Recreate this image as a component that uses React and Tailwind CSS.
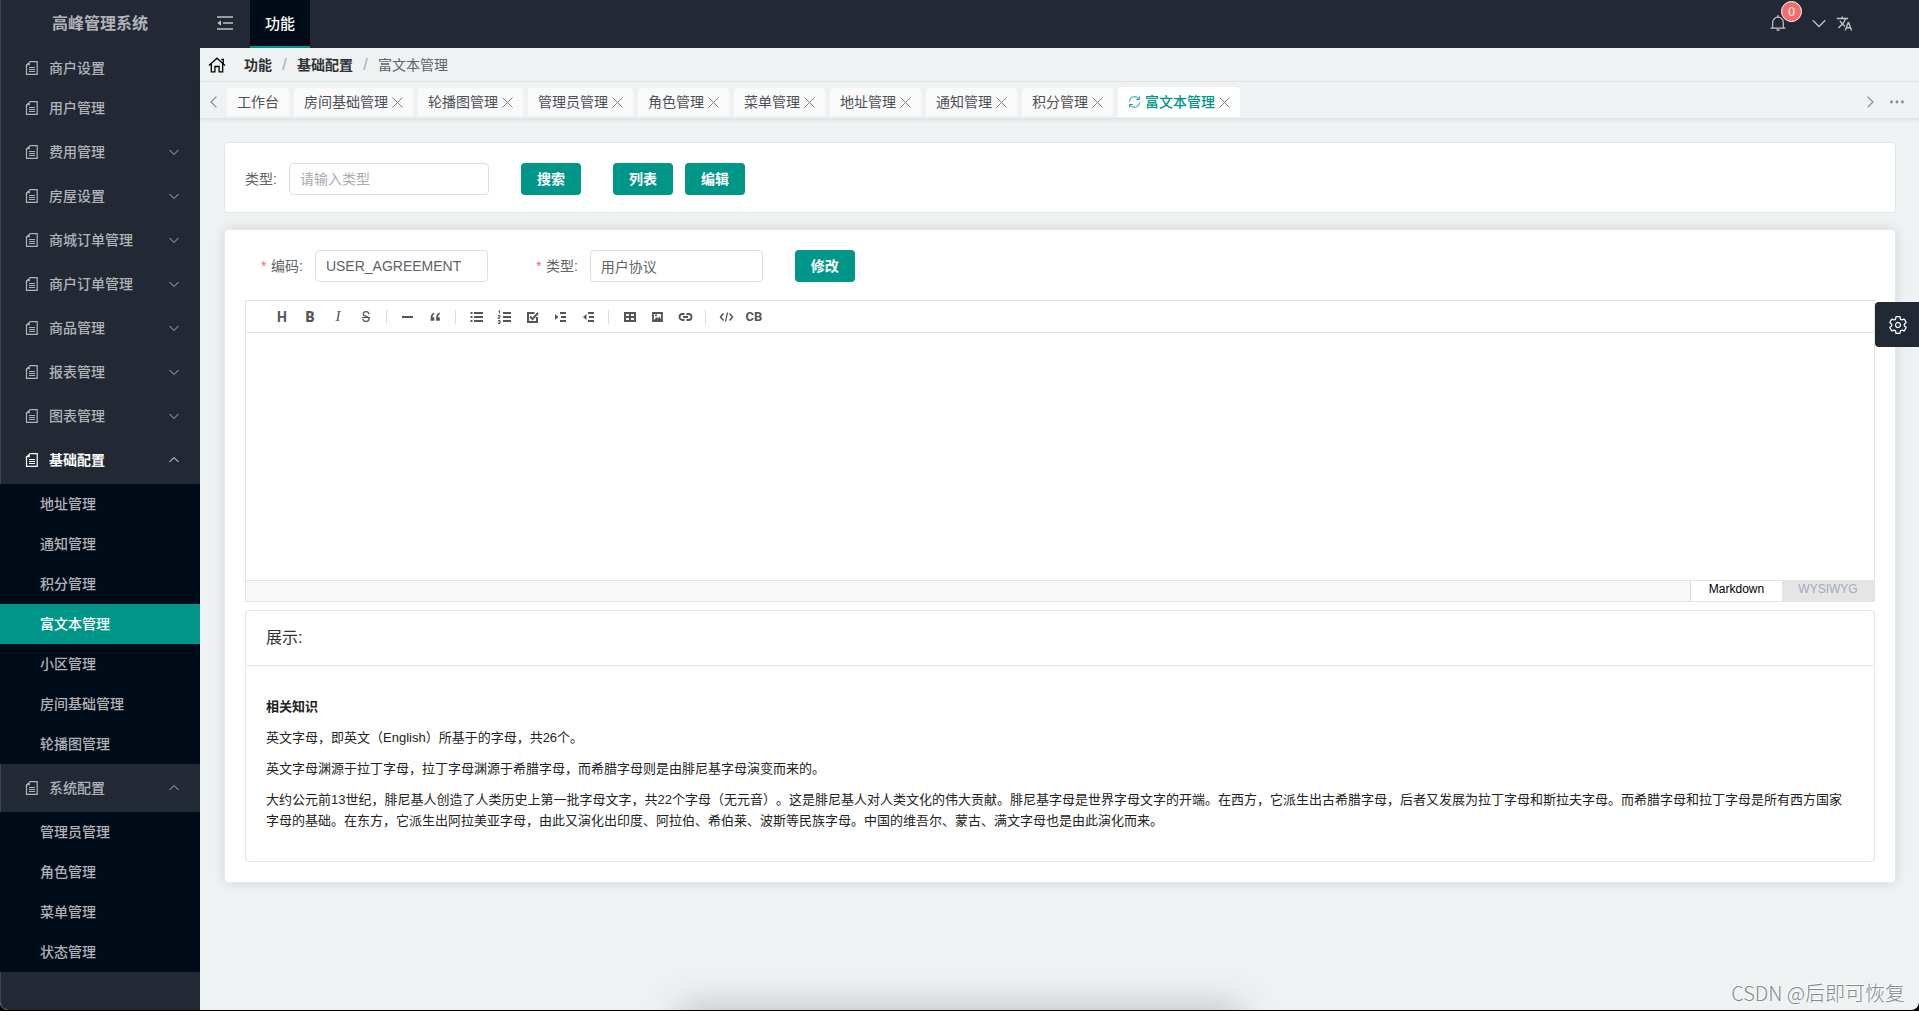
import React from "react";
import { IoSettingsOutline } from "react-icons/io5";

function DocIcon() {
  return (
    <svg width="13" height="14" viewBox="0 0 13 14" fill="none" stroke="currentColor" aria-hidden="true">
      <path d="M4.500 .6h7.700v12.800H1.500V4" strokeWidth="1.200" />
      <path d="M.3 4.300 4.800 .3v4z" fill="currentColor" stroke="none" />
      <path d="M4 6.500h6M4 8.500h6M4 10.500h6" />
    </svg>
  );
}

function HomeIcon() {
  return (
    <svg className="mr-[18px] text-black" width="18" height="16" viewBox="0 0 18 16" fill="none" stroke="currentColor" strokeWidth="1.300" aria-hidden="true">
      <path d="M1 8.500 9 1.200l8 7.300M13.300 2.500h2v4.200" />
      <path d="M3.300 7v7.800h3.600V9.500h4.200v5.300h3.600V7" />
    </svg>
  );
}

function BellIcon() {
  return (
    <svg width="16" height="16" viewBox="0 0 16 16" fill="none" stroke="currentColor" aria-hidden="true">
      <path d="M2.700 12.800V7.500a5.300 5.300 0 0 1 10.600 0v5.300M.5 13.200h15" strokeWidth="1.200" />
      <path d="M8 .3v1.700M6.500 15h3" strokeWidth="1.500" />
    </svg>
  );
}

function Chevron({ dir = "down", size = 10, width = 1, className = "" }) {
  const d = {
    down: "M.5 3 5 7.500 9.500 3",
    up: "M.5 7 5 2.500 9.500 7",
    left: "M7 .5 2.500 5 7 9.500",
    right: "M3 .5 7.500 5 3 9.500",
  }[dir];
  return (
    <svg className={className} width={size} height={size} viewBox="0 0 10 10" fill="none" stroke="currentColor" strokeWidth={width} aria-hidden="true">
      <path d={d} />
    </svg>
  );
}

function CloseIcon() {
  return (
    <svg width="11" height="11" viewBox="0 0 11 11" stroke="currentColor" fill="none" aria-hidden="true">
      <path d="M.5 .5l10 10M10.500 .5l-10 10" />
    </svg>
  );
}

const plainItems = ["商户设置", "用户管理"];
const groups = ["费用管理", "房屋设置", "商城订单管理", "商户订单管理", "商品管理", "报表管理", "图表管理"];
const baseItems = ["地址管理", "通知管理", "积分管理", "富文本管理", "小区管理", "房间基础管理", "轮播图管理"];
const systemItems = ["管理员管理", "角色管理", "菜单管理", "状态管理"];
const tabs = ["工作台", "房间基础管理", "轮播图管理", "管理员管理", "角色管理", "菜单管理", "地址管理", "通知管理", "积分管理"];

function GroupButton({ label, open, active, tall }) {
  return (
    <button
      type="button"
      aria-expanded={!!open}
      className={`flex w-full items-center pr-[21px] pl-[25px] ${tall ? "h-12" : "h-11"} ${active ? "font-bold text-white" : ""}`}
    >
      <DocIcon />
      <span className="ml-[11px] flex-1 text-left">{label}</span>
      <Chevron dir={open ? "up" : "down"} />
    </button>
  );
}

function SubMenu({ items, current }) {
  return (
    <ul className="bg-[#000c17]">
      {items.map((item) => (
        <li key={item}>
          <a
            href="#"
            className={`flex h-10 items-center pl-10 ${item === current ? "bg-[#009688] text-white" : ""}`}
          >
            {item}
          </a>
        </li>
      ))}
    </ul>
  );
}

function Sidebar() {
  return (
    <aside className="flex w-[200px] shrink-0 flex-col rounded-bl-lg border-l border-[#3d4450] bg-[#222834] text-sm font-medium text-[#b1b3b8]">
      <h1 className="-ml-px flex h-12 items-center justify-center pb-px text-base font-bold">高峰管理系统</h1>
      <nav className="-ml-px">
        {plainItems.map((item) => (
          <a key={item} href="#" className="flex h-10 items-center gap-[11px] pl-[25px]">
            <DocIcon />
            {item}
          </a>
        ))}
        <div className="py-0.5">
          {groups.map((g) => (
            <GroupButton key={g} label={g} />
          ))}
          <GroupButton label="基础配置" open active />
        </div>
        <SubMenu items={baseItems} current="富文本管理" />
        <GroupButton label="系统配置" open tall />
        <SubMenu items={systemItems} />
      </nav>
    </aside>
  );
}

function Header() {
  return (
    <header className="flex h-12 items-stretch bg-[#222834] text-[#c0c3c9]">
      <button type="button" aria-label="折叠菜单" className="flex w-[50px] items-center justify-center pb-0.5">
        <svg width="16" height="14" viewBox="0 0 16 14" fill="none" stroke="currentColor" strokeWidth="1.4">
          <path d="M0 1h16M6 7h10M0 13h16" />
          <path d="M4 4.200v5.600L.3 7z" fill="currentColor" stroke="none" />
        </svg>
      </button>
      <a href="#" className="flex w-[60px] items-center justify-center border-b-2 border-[#009688] bg-[#000c17] pt-0.5 text-[15px] font-medium text-white">
        功能
      </a>
      <div className="ml-auto flex items-center pr-[66px] pb-0.5">
        <button type="button" aria-label="通知" className="relative mr-[26px]">
          <BellIcon />
          <span className="absolute -top-3.5 left-[11px] flex h-[21px] w-[21px] items-center justify-center rounded-full border border-white bg-[#f56c6c] text-xs text-white">
            0
          </span>
        </button>
        <button type="button" aria-label="用户菜单" className="mr-2.5">
          <Chevron size={14} width={0.9} />
        </button>
        <button type="button" aria-label="语言">
          <svg width="17" height="17" viewBox="0 0 24 24" fill="currentColor">
            <path d="M12.870 15.070l-2.540-2.510.03-.03c1.740-1.940 2.980-4.170 3.710-6.530H17V4h-7V2H8v2H1v1.990h11.170C11.500 7.920 10.440 9.750 9 11.350 8.070 10.320 7.300 9.190 6.690 8h-2c.73 1.630 1.730 3.170 2.980 4.560l-5.090 5.020L4 19l5-5 3.110 3.110.76-2.040zM18.500 10h-2L12 22h2l1.120-3h4.750L21 22h2l-4.500-12zm-2.620 7l1.620-4.330L19.120 17h-3.240z" />
          </svg>
        </button>
      </div>
    </header>
  );
}

function Separator() {
  return <span className="mx-[9px] w-[7px] text-center text-base text-[#a8abb2]">/</span>;
}

function Breadcrumb() {
  return (
    <nav aria-label="面包屑" className="flex h-[34px] items-center border-b border-[#e4e8ea] px-2 text-sm">
      <HomeIcon />
      <a href="#" className="font-bold text-[#303133]">功能</a>
      <Separator />
      <a href="#" className="font-bold text-[#303133]">基础配置</a>
      <Separator />
      <span className="text-[#606266]">富文本管理</span>
    </nav>
  );
}

function TabBar() {
  return (
    <div className="flex h-[37px] items-center border-b border-[#dfe3e5] pt-1 pr-[15px] text-sm text-[#4d5056] shadow-[0_1px_4px_rgba(0,21,41,0.08)]">
      <button type="button" aria-label="向左" className="flex w-[27px] items-center justify-center text-[#86898e]">
        <Chevron dir="left" size={12} />
      </button>
      <div className="flex items-center gap-[5px]">
        {tabs.map((t, i) => (
          <div key={t} className="flex h-7 items-center gap-1 rounded-t-sm bg-[#fafafa] px-2.5">
            <a href="#">{t}</a>
            {i > 0 && (
              <button type="button" aria-label="关闭" className="text-[#7d8085]">
                <CloseIcon />
              </button>
            )}
          </div>
        ))}
        <div className="flex h-[30px] items-center gap-1 rounded-t-sm bg-white px-2.5">
          <svg width="13" height="14" viewBox="0 0 14 14" fill="none" stroke="#009688" aria-hidden="true">
            <path d="M1.500 6.500A5.500 5.500 0 0 1 11.800 4M12.500 7.500A5.500 5.500 0 0 1 2.200 10" />
            <path d="M12.300 1v3.300H9M1.700 13V9.700H5" />
          </svg>
          <a href="#" className="font-medium text-[#009688]">富文本管理</a>
          <button type="button" aria-label="关闭" className="text-[#7d8085]">
            <CloseIcon />
          </button>
        </div>
      </div>
      <button type="button" aria-label="向右" className="ml-auto text-[#86898e]">
        <Chevron dir="right" size={12} />
      </button>
      <button type="button" aria-label="更多" className="ml-3.5 text-[#86898e]">
        <svg width="14" height="4" viewBox="0 0 14 4" fill="currentColor">
          <circle cx="1.500" cy="2" r="1.400" />
          <circle cx="7" cy="2" r="1.400" />
          <circle cx="12.500" cy="2" r="1.400" />
        </svg>
      </button>
    </div>
  );
}

function Button({ children, className = "" }) {
  return (
    <button type="button" className={`h-8 w-[60px] rounded bg-[#009688] text-sm font-bold text-white ${className}`}>
      {children}
    </button>
  );
}

function Field({ id, label, required, value, placeholder, width }) {
  return (
    <div className="flex items-center text-sm text-[#606266]">
      {required && <span className="mr-1 w-[6px] text-[#f56c6c]">*</span>}
      <label htmlFor={id} className="mr-3">{label}:</label>
      <input
        id={id}
        defaultValue={value}
        placeholder={placeholder}
        className={`h-8 rounded border border-[#dcdfe6] bg-white px-2.5 text-[#606266] placeholder:text-[#a8abb2] ${width}`}
      />
    </div>
  );
}

function Svg({ children }) {
  return (
    <svg width="15" height="14" viewBox="0 0 15 14" fill="none" stroke="currentColor" strokeWidth="2">
      {children}
    </svg>
  );
}

const toolGroups = [
  [
    ["标题", <span className="font-[Roboto] text-sm font-bold">H</span>],
    ["粗体", <span className="font-[Roboto] text-sm font-black">B</span>],
    ["斜体", <span className="font-['Liberation_Serif'] text-[15px] italic">I</span>],
    ["删除线", <span className="font-[Roboto] text-sm line-through">S</span>],
  ],
  [
    ["分隔线", <Svg><path d="M2 7h11" /></Svg>],
    ["引用", <Svg><path d="M6 2.500C3.500 3.500 2.600 5.500 2.600 8.500v2.300h3.700V7.300H4.600c0-1.500.5-2.600 1.800-3.400zM11.500 2.500C9 3.500 8.100 5.500 8.100 8.500v2.300h3.700V7.300h-1.700c0-1.500.5-2.600 1.800-3.400z" fill="currentColor" stroke="none" /></Svg>],
  ],
  [
    ["无序列表", <Svg><path d="M5 3h9M5 7h9M5 11h9M1.500 3h2M1.500 7h2M1.500 11h2" /></Svg>],
    ["有序列表", <Svg><path d="M6 3h8M6 7h8M6 11h8" /><path d="M1.500 1.200l1-.7v3M1 5.500h2V7H1.300v1.500H3M1 10.500h2v3H1M1.500 12H3" strokeWidth="1" /></Svg>],
    ["任务列表", <Svg><path d="M9.500 3H3v9h9V7" /><path d="M5 6.500l2.500 2.500L13 3" /></Svg>],
    ["增加缩进", <Svg><path d="M7 3h6M8 7h5M7 11h6" /><path d="M2 4l3.500 3L2 10z" fill="currentColor" stroke="none" /></Svg>],
    ["减少缩进", <Svg><path d="M7 3h6M8 7h5M7 11h6" /><path d="M5.500 4L2 7l3.500 3z" fill="currentColor" stroke="none" /></Svg>],
  ],
  [
    ["表格", <Svg><path d="M3 3h10v8H3zM8 3v8M3 7h10" /></Svg>],
    ["图片", <Svg><path d="M3 3h9v8H3z" strokeWidth="1.800" /><path d="M4 10l2.500-3 1.500 1.500L9.500 6.500 11.500 10z" fill="currentColor" stroke="none" /><circle cx="6" cy="5.300" r="1" fill="currentColor" stroke="none" /></Svg>],
    ["链接", <Svg><path d="M6.500 10H4.500a3 3 0 0 1 0-6h2M8.500 4h2a3 3 0 0 1 0 6h-2M5 7h5" strokeWidth="1.800" /></Svg>],
  ],
  [
    ["行内代码", <Svg><path d="M4.500 3.500L1.500 7l3 3.500M10.500 3.500l3 3.500-3 3.500" strokeWidth="1.500" /><path d="M8.500 2.500l-2 9" strokeWidth="1.200" /></Svg>],
    ["代码块", <span className="font-[Roboto] text-[13px] font-bold">CB</span>],
  ],
];

function Editor() {
  return (
    <div className="border border-[#e1e3e9]">
      <div role="toolbar" aria-label="编辑工具" className="flex h-8 items-center border-b border-[#e4e4e6] pl-[22px] text-[#555]">
        {toolGroups.map((group, i) => (
          <React.Fragment key={i}>
            {i > 0 && <span className="mx-1.5 h-3.5 w-px bg-[#dcdcdc]" />}
            {group.map(([name, icon]) => (
              <button key={name} type="button" aria-label={name} className="flex h-7 w-7 items-center justify-center">
                {icon}
              </button>
            ))}
          </React.Fragment>
        ))}
      </div>
      <textarea aria-label="内容" className="block h-[247px] w-full resize-none p-4 text-sm outline-none" />
      <div className="flex h-[21px] justify-end border-t border-[#e1e3e9] bg-[#f9f9f9] text-xs">
        <button type="button" className="w-[92px] border-l border-[#dedede] bg-white pb-1 text-black">Markdown</button>
        <button type="button" className="w-[92px] bg-[#e5e5e5] pb-1 text-[#a0aabf]">WYSIWYG</button>
      </div>
    </div>
  );
}

function Preview() {
  return (
    <section className="mt-2 rounded border border-[#e4e7ed]">
      <h2 className="flex h-[55px] items-center border-b border-[#e4e7ed] px-5 text-base text-[#303133]">展示:</h2>
      <div className="flex flex-col gap-2.5 px-5 py-[30px] text-[13px] leading-[21px] text-[#222] [text-spacing-trim:space-all]">
        <h3 className="font-bold">相关知识</h3>
        <p>英文字母，即英文（English）所基于的字母，共26个。</p>
        <p>英文字母渊源于拉丁字母，拉丁字母渊源于希腊字母，而希腊字母则是由腓尼基字母演变而来的。</p>
        <p>
          大约公元前13世纪，腓尼基人创造了人类历史上第一批字母文字，共22个字母（无元音）。这是腓尼基人对人类文化的伟大贡献。腓尼基字母是世界字母文字的开端。在西方，它派生出古希腊字母，后者又发展为拉丁字母和斯拉夫字母。而希腊字母和拉丁字母是所有西方国家字母的基础。在东方，它派生出阿拉美亚字母，由此又演化出印度、阿拉伯、希伯莱、波斯等民族字母。中国的维吾尔、蒙古、满文字母也是由此演化而来。
        </p>
      </div>
    </section>
  );
}

export default function App() {
  return (
    <div className="min-h-screen bg-black font-['Liberation_Sans','Noto_Sans_CJK_SC',sans-serif]">
      <div className="relative flex min-h-[calc(100vh-1px)] overflow-hidden rounded-b-lg bg-[#eef2f3]">
        <Sidebar />
        <div className="flex min-w-0 flex-1 flex-col">
          <Header />
          <Breadcrumb />
          <TabBar />
          <main className="pt-[23px] pr-[23px] pl-6">
            <form className="flex items-center rounded border border-[#e1e5ea] bg-white px-5 pt-5 pb-[17px]" onSubmit={(e) => e.preventDefault()}>
              <Field id="search-type" label="类型" placeholder="请输入类型" width="w-[200px]" />
              <Button className="ml-8">搜索</Button>
              <Button className="ml-8">列表</Button>
              <Button className="ml-3">编辑</Button>
            </form>
            <section className="mt-4 rounded border border-[#e4e7ed] bg-white p-5 shadow-[0_0_12px_rgba(0,0,0,0.12)]">
              <form className="mb-[18px] flex items-center pl-4" onSubmit={(e) => e.preventDefault()}>
                <Field id="code" label="编码" required value="USER_AGREEMENT" width="w-[173px]" />
                <div className="ml-12">
                  <Field id="type" label="类型" required value="用户协议" width="w-[173px]" />
                </div>
                <Button className="ml-8">修改</Button>
              </form>
              <Editor />
              <Preview />
            </section>
          </main>
        </div>
        <button type="button" aria-label="设置" className="absolute top-[302px] right-0 flex h-[45px] w-11 items-center justify-center rounded-l bg-[#222834] pl-0.5 text-white">
          <IoSettingsOutline size={20} />
        </button>
        <div className="pointer-events-none absolute inset-x-0 -bottom-10 mx-auto h-10 w-[560px] shadow-[0_0_40px_rgba(0,0,0,0.25)]" />
        <div className="pointer-events-none absolute right-3.5 bottom-0.5 font-['Noto_Sans_CJK_SC',sans-serif] text-[20px] font-light text-[#85898c] [text-shadow:-1px_-1px_0_#fff]">
          CSDN @后即可恢复
        </div>
      </div>
    </div>
  );
}
